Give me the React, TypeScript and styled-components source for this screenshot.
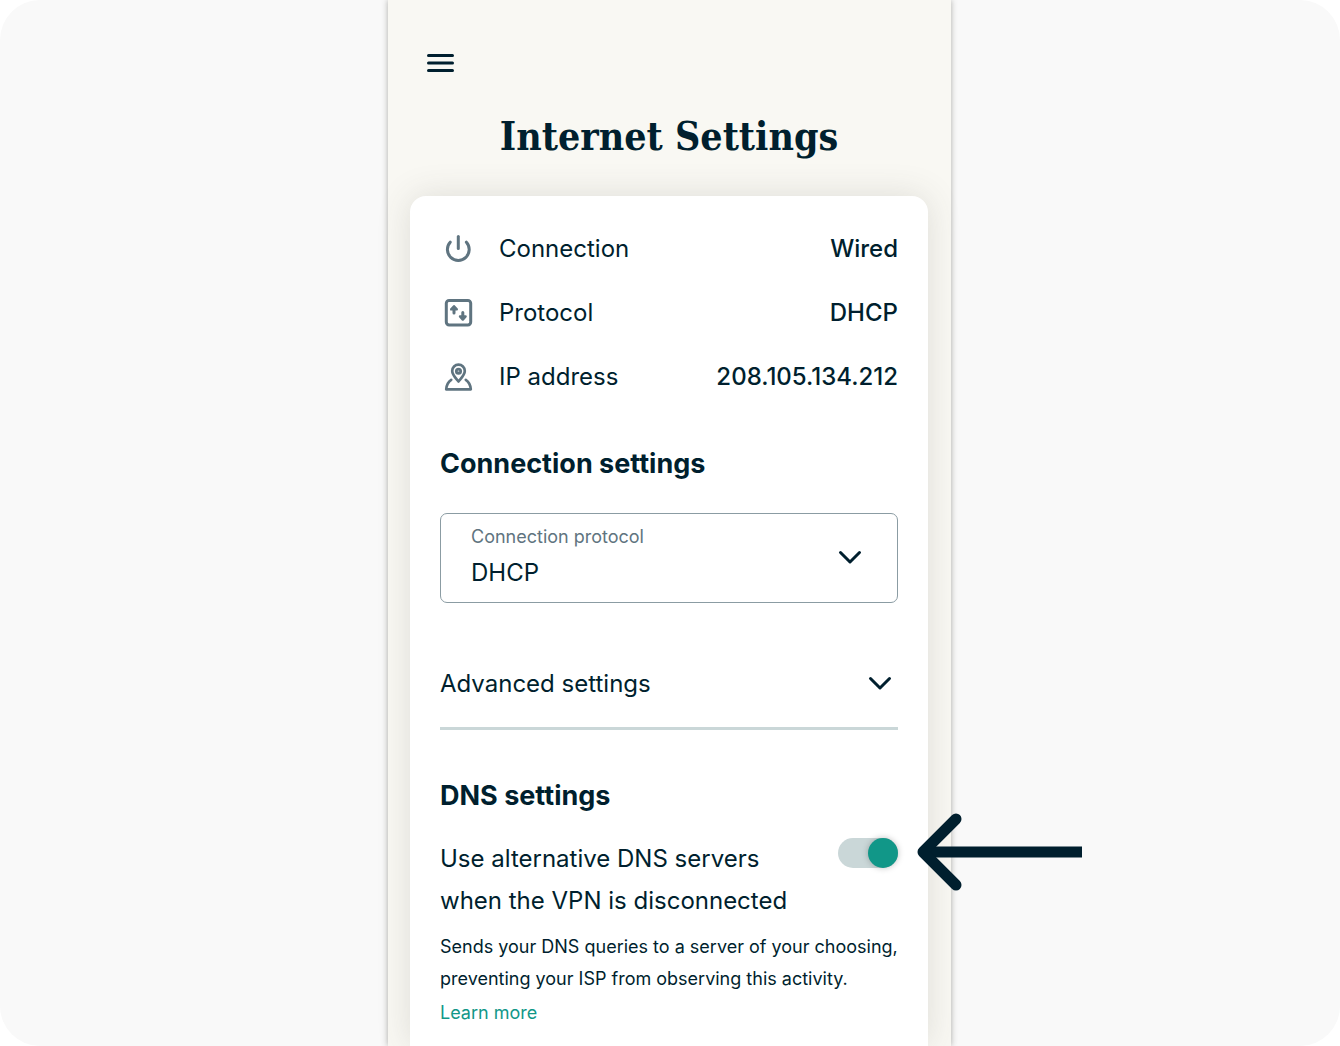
import React, { useState } from "react";
import styled, { createGlobalStyle } from "styled-components";

const ink = "#001f2e";
const slate = "#5f7480";
const mist = "#cad7d8";
const teal = "#119788";

const GlobalStyle = createGlobalStyle`
  *, *::before, *::after { box-sizing: border-box; }
  body {
    margin: 0;
    background: #ffffff;
    color: ${ink};
    font-family: Inter, "Liberation Sans", sans-serif;
  }
  h1, h2, p, dl, dt, dd { margin: 0; }
`;

const Canvas = styled.div`
  display: flex;
  justify-content: center;
  min-height: 100vh;
  padding-right: 1px;
  overflow: hidden;
  background: #f9f9f9;
  border-radius: 40px;
`;

const Phone = styled.main`
  display: flex;
  flex-direction: column;
  width: 100%;
  max-width: 563px;
  padding: 0 23px 0 22px;
  background: #f9f8f3;
  box-shadow: 0 0 6px rgba(60, 60, 50, 0.4);
`;

const TopBar = styled.header`
  display: flex;
  padding: 47px 13px 0;
`;

const MenuButton = styled.button`
  display: flex;
  padding: 4px;
  border: 0;
  background: none;
  color: ${ink};
  cursor: pointer;
`;

const Title = styled.h1`
  margin-top: 31px;
  text-align: center;
  font-family: "DejaVu Serif Condensed", "DejaVu Serif", serif;
  font-size: 39px;
  line-height: 52px;
  font-weight: 700;
`;

const Card = styled.section`
  flex: 1;
  margin-top: 34px;
  padding: 37px 30px 16px;
  background: #ffffff;
  border-radius: 16px 16px 0 0;
  box-shadow: 0 0 34px rgba(70, 70, 60, 0.15);
`;

const InfoList = styled.dl`
  display: flex;
  flex-direction: column;
  gap: 32px;
`;

const InfoRow = styled.div`
  display: flex;
  align-items: center;
  gap: 23px;
  height: 32px;
  font-size: 24px;
  line-height: 32px;

  svg { color: ${slate}; }
  dd { margin-left: auto; font-weight: 500; }
`;

const Heading = styled.h2`
  margin-top: ${(p: { $gap: number }) => p.$gap}px;
  font-size: 27px;
  line-height: 36px;
  font-weight: 700;
`;

const SelectBox = styled.div`
  display: grid;
  grid-template-columns: 1fr auto;
  align-items: center;
  margin-top: 31px;
  padding: 8px 34px 9px 30px;
  border: 1px solid #8b9ca3;
  border-radius: 7px;
`;

const SelectLabel = styled.label`
  grid-column: 1;
  font-size: 18px;
  line-height: 30px;
  color: ${slate};
`;

const Select = styled.select`
  grid-column: 1;
  height: 41px;
  padding: 0;
  border: 0;
  appearance: none;
  background: none;
  color: ${ink};
  font-family: inherit;
  font-size: 24px;
  line-height: 41px;
`;

const SelectArrow = styled.span`
  grid-column: 2;
  grid-row: 1 / span 2;
  display: flex;
  pointer-events: none;
`;

const Disclosure = styled.button`
  display: flex;
  align-items: center;
  justify-content: space-between;
  width: 100%;
  margin-top: 53px;
  padding: 8px 5px 23px 0;
  border: 0;
  border-bottom: 3px solid ${mist};
  background: none;
  color: ${ink};
  font-family: inherit;
  font-size: 24px;
  line-height: 40px;
  text-align: left;
  cursor: pointer;
`;

const ToggleRow = styled.div`
  display: flex;
  align-items: flex-start;
  justify-content: space-between;
  margin-top: 24px;
`;

const ToggleLabel = styled.label`
  max-width: 360px;
  font-size: 24px;
  line-height: 42px;
`;

const SwitchHolder = styled.div`
  position: relative;
  display: flex;
`;

const Switch = styled.input`
  appearance: none;
  display: flex;
  justify-content: flex-start;
  width: 60px;
  height: 30px;
  margin: 0;
  border-radius: 15px;
  background: ${mist};
  cursor: pointer;

  &::before {
    content: "";
    width: 30px;
    height: 30px;
    border-radius: 50%;
    background: #ffffff;
    box-shadow: 0 0 6px rgba(0, 0, 0, 0.25);
  }
  &:checked { justify-content: flex-end; }
  &:checked::before { background: ${teal}; }
`;

const Pointer = styled.svg`
  position: absolute;
  left: calc(100% + 18px);
  top: -26px;
  pointer-events: none;
`;

const Hint = styled.p`
  margin-top: 9px;
  font-size: 18px;
  line-height: 32px;
`;

const LearnMore = styled.a`
  display: inline-block;
  margin-top: 2px;
  color: ${teal};
  font-size: 18px;
  line-height: 32px;
  text-decoration: none;
`;

const Chevron = () => (
  <svg width="26" height="18" viewBox="0 0 26 18" fill="none" stroke={ink} strokeWidth="3" strokeLinecap="round" strokeLinejoin="round" aria-hidden="true">
    <path d="M3.5 3.500l9.500 9.500 9.500-9.500" />
  </svg>
);

const PowerIcon = () => (
  <svg width="36" height="32" viewBox="0 0 36 32" fill="none" stroke="currentColor" strokeWidth="3" strokeLinecap="round" aria-hidden="true">
    <path d="M18.3 3.500V15.500" />
    <path d="M10.2 9.200a10.900 10.900 0 1 0 16.200 0" />
  </svg>
);

const ProtocolIcon = () => (
  <svg width="36" height="32" viewBox="0 0 36 32" fill="none" stroke="currentColor" strokeWidth="3" strokeLinecap="round" strokeLinejoin="round" aria-hidden="true">
    <rect x="6.300" y="3.500" width="24.400" height="24.400" rx="2.800" />
    <path d="M14 16V11.500M22.800 15.500v5" strokeWidth="3" />
    <path d="M11.200 12.400l2.800-3.200 2.800 3.200zM20 19.400l2.800 3.200 2.800-3.200z" fill="currentColor" strokeWidth="2.400" />
  </svg>
);

const LocationIcon = () => (
  <svg width="36" height="32" viewBox="0 0 36 32" fill="none" stroke="currentColor" strokeWidth="2.700" strokeLinecap="round" strokeLinejoin="round" aria-hidden="true">
    <path d="M18.500 20.500c-2.300-3-6.300-6.800-6.300-10.600a6.300 6.300 0 0 1 12.600 0c0 3.800-4 7.600-6.300 10.600z" />
    <circle cx="18.500" cy="10.200" r="2.200" fill="currentColor" fillOpacity="0.500" />
    <path d="M11.200 18.800C8.200 20.800 6.500 24 6.200 28.300h24.600c-.3-4.300-2-7.500-5-9.500" />
  </svg>
);

const facts = [
  { label: "Connection", value: "Wired", Icon: PowerIcon },
  { label: "Protocol", value: "DHCP", Icon: ProtocolIcon },
  { label: "IP address", value: "208.105.134.212", Icon: LocationIcon },
];

export default function App() {
  const [altDns, setAltDns] = useState(true);

  return (
    <>
      <GlobalStyle />
      <Canvas>
        <Phone>
          <TopBar>
            <MenuButton type="button" aria-label="Menu">
              <svg width="27" height="24" viewBox="0 0 27 24" stroke="currentColor" strokeWidth="3" strokeLinecap="round" aria-hidden="true">
                <path d="M1.500 4.500h24M1.500 12h24M1.500 19.500h24" />
              </svg>
            </MenuButton>
          </TopBar>
          <Title>Internet Settings</Title>
          <Card>
            <InfoList>
              {facts.map(({ label, value, Icon }) => (
                <InfoRow key={label}>
                  <Icon />
                  <dt>{label}</dt>
                  <dd>{value}</dd>
                </InfoRow>
              ))}
            </InfoList>

            <Heading $gap={53}>Connection settings</Heading>
            <SelectBox>
              <SelectLabel htmlFor="protocol">Connection protocol</SelectLabel>
              <Select id="protocol" defaultValue="DHCP">
                <option>DHCP</option>
              </Select>
              <SelectArrow>
                <Chevron />
              </SelectArrow>
            </SelectBox>

            <Disclosure type="button" aria-expanded={false}>
              Advanced settings
              <Chevron />
            </Disclosure>

            <Heading $gap={48}>DNS settings</Heading>
            <ToggleRow>
              <ToggleLabel htmlFor="alt-dns">
                Use alternative DNS servers when the VPN is disconnected
              </ToggleLabel>
              <SwitchHolder>
                <Switch
                  id="alt-dns"
                  type="checkbox"
                  role="switch"
                  checked={altDns}
                  onChange={(e) => setAltDns(e.target.checked)}
                />
                <Pointer width="168" height="80" viewBox="0 0 168 80" fill="none" stroke={ink} strokeWidth="11" strokeLinejoin="round" aria-hidden="true">
                  <path d="M8 40h158" />
                  <path d="M40 7L7 40l33 33" strokeLinecap="round" />
                </Pointer>
              </SwitchHolder>
            </ToggleRow>
            <Hint>
              Sends your DNS queries to a server of your choosing, preventing your ISP from observing this activity.
            </Hint>
            <LearnMore href="#learn-more">Learn more</LearnMore>
          </Card>
        </Phone>
      </Canvas>
    </>
  );
}
